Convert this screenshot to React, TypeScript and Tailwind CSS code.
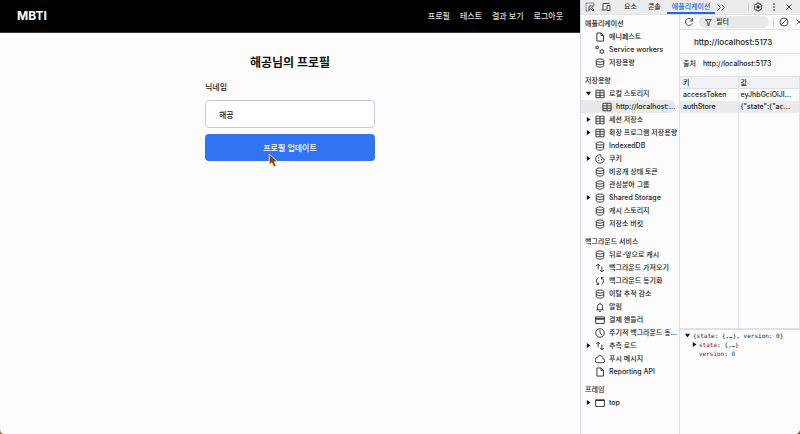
import React from 'react'

type IconName =
    | 'file'
    | 'gears'
    | 'database'
    | 'table'
    | 'cookie'
    | 'upDown'
    | 'sync'
    | 'bell'
    | 'card'
    | 'clock'
    | 'cloud'
    | 'frame'

type Item = {
    label: string
    icon: IconName
    arrow?: 'open' | 'closed'
    child?: boolean
}

const groups: { title: string; items: Item[] }[] = [
    {
        title: '애플리케이션',
        items: [
            { label: '매니페스트', icon: 'file' },
            { label: 'Service workers', icon: 'gears' },
            { label: '저장용량', icon: 'database' },
        ],
    },
    {
        title: '저장용량',
        items: [
            { label: '로컬 스토리지', icon: 'table', arrow: 'open' },
            { label: 'http://localhost:...', icon: 'table', child: true },
            { label: '세션 저장소', icon: 'table', arrow: 'closed' },
            { label: '확장 프로그램 저장용량', icon: 'table', arrow: 'closed' },
            { label: 'IndexedDB', icon: 'database' },
            { label: '쿠키', icon: 'cookie', arrow: 'closed' },
            { label: '비공개 상태 토큰', icon: 'database' },
            { label: '관심분야 그룹', icon: 'database' },
            { label: 'Shared Storage', icon: 'database', arrow: 'closed' },
            { label: '캐시 스토리지', icon: 'database' },
            { label: '저장소 버킷', icon: 'database' },
        ],
    },
    {
        title: '백그라운드 서비스',
        items: [
            { label: '뒤로-앞으로 캐시', icon: 'database' },
            { label: '백그라운드 가져오기', icon: 'upDown' },
            { label: '백그라운드 동기화', icon: 'sync' },
            { label: '이탈 추적 감소', icon: 'database' },
            { label: '알림', icon: 'bell' },
            { label: '결제 핸들러', icon: 'card' },
            { label: '주기적 백그라운드 동...', icon: 'clock' },
            { label: '추측 로드', icon: 'upDown', arrow: 'closed' },
            { label: '푸시 메시지', icon: 'cloud' },
            { label: 'Reporting API', icon: 'file' },
        ],
    },
    {
        title: '프레임',
        items: [{ label: 'top', icon: 'frame', arrow: 'closed' }],
    },
]

const shapes: Record<IconName, React.ReactNode> = {
    file: <path d="M3 1.500h6.500l4 4v9H3zM9.500 1.500v4h4" />,
    gears: (
        <>
            <circle cx="3.5" cy="4" r="1.8" />
            <path d="M3.5 1v1M3.5 6v1M.8 2.5l1 .6M6.2 5.5l-1-.6M.8 5.5l1-.6M6.2 2.5l-1 .6" />
            <circle cx="11" cy="10.5" r="2.8" />
            <path d="M11 6.2v1.5M11 13.3v1.5M7.2 8.3l1.3.8M13.5 11.9l1.3.8M7.2 12.7l1.3-.8M13.5 9.1l1.3-.8" />
        </>
    ),
    database: (
        <>
            <ellipse cx="8" cy="4" rx="6" ry="2.6" />
            <path d="M2 4v8c0 1.5 2.7 2.6 6 2.6s6-1.1 6-2.6V4M2 8c0 1.5 2.7 2.6 6 2.6S14 9.500 14 8" />
        </>
    ),
    table: <path d="M1.500 2h13v12h-13zM1.500 6h13M1.500 10h13M8 2v12" />,
    cookie: (
        <>
            <path d="M8 1.200a6.800 6.800 0 1 0 6.800 6.800c-1.800 0-2.800-1-2.800-2.500-2 0-3.200-1.500-2.600-4.100z" />
            <path d="M5 6h1.500M5.500 10.500h1.500M9.500 9h1.500" strokeWidth="2" />
        </>
    ),
    upDown: <path d="M5 10V2M2 4.800L5 1.800l3 3M11 6v8M8 11.200l3 3 3-3" />,
    sync: <path d="M5.500 2.500C1.500 5 1.500 11 5.500 13.500M2.500 13.800h3.300v-3.300M10.500 13.500c4-2.500 4-8.500 0-11M13.500 2.200h-3.300v3.300" />,
    bell: <path d="M2.500 12.500h11M4 12.500V7a4 4 0 0 1 8 0v5.500M8 1.200V3M6.500 14.800h3" />,
    card: (
        <>
            <path d="M1 3h14v10.500H1z" />
            <path d="M1 6.200h14" strokeWidth="2.600" />
        </>
    ),
    clock: (
        <>
            <circle cx="8" cy="8" r="6.800" />
            <path d="M8 3.500V8l3 3" />
        </>
    ),
    cloud: <path d="M4.200 13.800h8a3.100 3.100 0 0 0 .5-6.200C12.200 4.300 10.400 2.600 8 2.600c-2.100 0-3.400 1.100-4.100 3a4.100 4.100 0 0 0 .3 8.200z" />,
    frame: (
        <>
            <path d="M1 3h14v10.500H1z" />
            <path d="M1 3.800h14" strokeWidth="2" />
        </>
    ),
}

const TreeIcon = ({ name }: { name: IconName }) => (
    <svg viewBox="0 0 16 16" className="size-[10px] shrink-0" fill="none" stroke="#333" strokeWidth="1.5">
        {shapes[name]}
    </svg>
)

const Arrow = ({ open }: { open?: boolean }) => (
    <svg viewBox="0 0 6 6" className="size-[5px] shrink-0" fill="#111">
        {open ? <path d="M0 1h6L3 5.500z" /> : <path d="M1 0v6l4.500-3z" />}
    </svg>
)

const Header = () => (
    <header className="flex h-[33px] items-center justify-between border-b border-[#333] bg-black px-[17px] text-white">
        <a href="#home" className="text-[12px] font-bold">
            MBTI
        </a>
        <nav className="flex gap-[10px] text-[8px] font-medium text-[#ddd]">
            <a href="#profile">프로필</a>
            <a href="#test">테스트</a>
            <a href="#results">결과 보기</a>
            <a href="#logout">로그아웃</a>
        </nav>
    </header>
)

const Cursor = () => (
    <svg viewBox="0 0 10 14" className="absolute top-[19px] left-[63px] h-[15px] w-[11px]">
        <path d="M1 1v10l2.500-2 1.700 4 2.300-.9-1.700-3.900H9z" fill="#8a4310" stroke="#f3e9e0" strokeWidth=".8" />
    </svg>
)

const Profile = () => (
    <main className="mx-auto w-full max-w-[170px] pt-[22px]">
        <h1 className="text-center text-[12px] leading-[16px] font-bold text-[#111]">해공님의 프로필</h1>
        <form>
            <label htmlFor="nickname" className="mt-[10px] block text-[8px] leading-[12px] font-medium text-[#222]">
                닉네임
            </label>
            <input
                id="nickname"
                defaultValue="해공"
                className="mt-[7px] block h-[28px] w-full rounded-[4px] border border-[#c9cbd3] bg-white px-[13px] text-[8px] font-medium text-[#222] outline-none"
            />
            <div className="relative mt-[6px]">
                <button
                    type="button"
                    className="block h-[27px] w-full rounded-[4px] bg-[#3174f1] text-[8px] font-medium text-white"
                >
                    프로필 업데이트
                </button>
                <Cursor />
            </div>
        </form>
    </main>
)

const TabBar = () => (
    <div className="flex h-[15px] items-stretch border-b border-[#dcdfe4] bg-[#ececec] text-[7px] font-medium text-[#333]">
        <button aria-label="검사" className="ml-[4px] w-[11px]">
            <svg viewBox="0 0 20 20" className="size-[10px]" fill="none" stroke="#444" strokeWidth="1.800">
                <path d="M18 7V2H2v16h5" strokeDasharray="2.500 1.500" />
                <path d="M8 8h9l-3.500 3 4.500 5-2 2-4.500-5L8 17z" />
            </svg>
        </button>
        <button aria-label="기기" className="ml-[5px] w-[11px]">
            <svg viewBox="0 0 20 20" className="size-[10px]" fill="none" stroke="#444" strokeWidth="2">
                <path d="M17 3H4v12M1 16h9M12 7h6v10h-6z" />
            </svg>
        </button>
        <button className="ml-[12px]">요소</button>
        <button className="ml-[11px]">콘솔</button>
        <button className="ml-[6px] border-b-2 border-[#2468dc] px-[5px] pt-[2px] leading-[10px] text-[#2468dc]">
            애플리케이션
        </button>
        <button aria-label="더보기" className="ml-[2px]">
            <svg viewBox="0 0 14 12" className="h-[7px] w-[8px]" fill="none" stroke="#444" strokeWidth="1.600">
                <path d="M1 1l5 5-5 5M8 1l5 5-5 5" />
            </svg>
        </button>
        <span className="my-[3px] ml-auto w-px bg-[#d5d5d5]" />
        <button aria-label="설정" className="ml-[4px]">
            <svg viewBox="0 0 20 20" className="size-[10px]" fill="none" stroke="#333" strokeWidth="1.900">
                <path d="M8 2h4l1 2.500 2.500-.3 2 3.500L16 10l1.500 2.300-2 3.500-2.500-.3L12 18H8l-1-2.500-2.500.3-2-3.500L4 10 2.500 7.700l2-3.500 2.500.3z" />
                <circle cx="10" cy="10" r="2.500" fill="#333" />
            </svg>
        </button>
        <button aria-label="메뉴" className="ml-[9px]">
            <svg viewBox="0 0 4 16" className="h-[8px] w-[4px]" fill="#333">
                <circle cx="2" cy="2" r="1.700" />
                <circle cx="2" cy="8" r="1.700" />
                <circle cx="2" cy="14" r="1.700" />
            </svg>
        </button>
        <button aria-label="닫기" className="mr-[8px] ml-[10px]">
            <svg viewBox="0 0 12 12" className="size-[6px]" stroke="#333" strokeWidth="1.800">
                <path d="M1 1l10 10M11 1L1 11" />
            </svg>
        </button>
    </div>
)

const Sidebar = () => (
    <aside className="flex w-[99px] shrink-0 flex-col gap-[5px] overflow-hidden border-r border-[#dde0e6] pt-[2px] text-[7px] leading-[13px] font-medium text-[#222]">
        {groups.map((group) => (
            <section key={group.title}>
                <h2 className="pl-[4px]">{group.title}</h2>
                <ul>
                    {group.items.map((item) => (
                        <li
                            key={item.label}
                            className={
                                item.child
                                    ? 'mr-[3px] flex h-[13px] items-center gap-[4px] rounded-r-full bg-[#e9e9e9] pl-[21px] whitespace-nowrap'
                                    : 'flex h-[13px] items-center gap-[4px] pl-[5px] whitespace-nowrap'
                            }
                        >
                            {!item.child && (
                                <span className="flex w-[5px] shrink-0">
                                    {item.arrow && <Arrow open={item.arrow === 'open'} />}
                                </span>
                            )}
                            <TreeIcon name={item.icon} />
                            <span>{item.label}</span>
                        </li>
                    ))}
                </ul>
            </section>
        ))}
    </aside>
)

const FilterBar = () => (
    <div className="flex h-[15px] shrink-0 items-center overflow-hidden border-b border-[#e1e3e8] pl-[4px]">
        <button aria-label="새로고침" className="shrink-0">
            <svg viewBox="0 0 20 20" className="size-[10px]" fill="none" stroke="#444" strokeWidth="2">
                <path d="M16.500 12.500A7 7 0 1 1 15.500 5.500L17 7.500M17.500 2v6h-6" />
            </svg>
        </button>
        <label className="ml-[5px] flex h-[12px] w-[70px] shrink-0 items-center gap-[4px] rounded-full bg-[#e9e9e9] pl-[6px]">
            <svg viewBox="0 0 12 12" className="size-[7px] shrink-0" fill="none" stroke="#333" strokeWidth="1.500">
                <path d="M1 1h10L7 6.500V11H5V6.500z" />
            </svg>
            <input
                aria-label="필터"
                placeholder="필터"
                className="w-full min-w-0 bg-transparent text-[7px] font-medium outline-none placeholder:text-[#333]"
            />
        </label>
        <span className="ml-[4px] h-[9px] w-px shrink-0 bg-[#d5d5d5]" />
        <button aria-label="모두 지우기" className="ml-[5px] shrink-0">
            <svg viewBox="0 0 20 20" className="size-[10px]" fill="none" stroke="#444" strokeWidth="1.900">
                <circle cx="10" cy="10" r="8" />
                <path d="M16 4L4 16" />
            </svg>
        </button>
        <button aria-label="선택 항목 삭제" className="ml-[7px] shrink-0">
            <svg viewBox="0 0 12 12" className="size-[6px]" stroke="#444" strokeWidth="1.800">
                <path d="M1 1l10 10M11 1L1 11" />
            </svg>
        </button>
    </div>
)

const StorageTable = () => (
    <div className="flex h-[252px] flex-col border-r border-[#dde0e6]">
        <table className="h-full w-full table-fixed border-collapse text-left text-[7px] leading-[11px] font-medium text-[#222]">
            <thead>
                <tr className="h-[12px] border-y border-[#dde0e6] bg-[#f1f2f3]">
                    <th className="w-[58px] border-r border-[#dde0e6] pl-[3px] font-medium">키</th>
                    <th className="pl-[2px] font-medium">값</th>
                </tr>
            </thead>
            <tbody>
                <tr className="h-[12px]">
                    <td className="border-r border-[#dde0e6] pl-[3px]">accessToken</td>
                    <td className="pl-[2px] whitespace-nowrap">eyJhbGciOiJI...</td>
                </tr>
                <tr className="h-[12px] bg-[#ebebeb]">
                    <td className="border-r border-[#dde0e6] pl-[3px]">authStore</td>
                    <td className="pl-[2px] whitespace-nowrap">{'{"state":{"ac...'}</td>
                </tr>
                <tr>
                    <td className="border-r border-[#dde0e6]" />
                    <td />
                </tr>
            </tbody>
        </table>
    </div>
)

const Preview = () => (
    <div className="border-t-2 border-[#dfe1e5] pt-px pl-[5px] font-['DejaVu_Sans_Mono',monospace] text-[6px] leading-[9px] whitespace-nowrap text-[#222]">
        <div className="flex items-center gap-[3px]">
            <Arrow open />
            {'{state: {,…}, version: 0}'}
        </div>
        <div className="flex items-center gap-[2px] pl-[7px]">
            <Arrow />
            <span>
                <span className="text-[#8e004b]">state</span>
                {': {,…}'}
            </span>
        </div>
        <div className="pl-[14px]">
            <span className="text-[#8e004b]">version</span>: <span className="text-[#0842a0]">0</span>
        </div>
    </div>
)

const DevTools = () => (
    <div className="flex w-[220px] shrink-0 flex-col border-l border-[#d5d8de]">
        <TabBar />
        <div className="flex flex-1">
            <Sidebar />
            <div className="min-w-0 flex-1 text-[#222]">
                <FilterBar />
                <h2 className="h-[24px] border-b border-[#e1e3e8] pl-[14px] text-[8px] leading-[25px] font-medium">
                    http://localhost:5173
                </h2>
                <p className="flex h-[22px] items-center gap-[7px] pb-[2px] pl-[3px] text-[7px] font-medium">
                    <span>출처</span>
                    <span>http://localhost:5173</span>
                </p>
                <StorageTable />
                <Preview />
            </div>
        </div>
    </div>
)

// Desktop showing behind the rounded window corners
const Corners = () => (
    <>
        <svg viewBox="0 0 5 5" className="absolute bottom-0 left-0 size-[5px]">
            <path d="M0 0q0 5 5 5H0z" fill="#8b7347" />
        </svg>
        <svg viewBox="0 0 5 5" className="absolute right-0 bottom-0 size-[5px]">
            <path d="M5 0q0 5-5 5h5z" fill="#6b4a35" />
        </svg>
    </>
)

export default function App() {
    return (
        <div className="relative flex min-h-screen overflow-hidden bg-[#fcfcfc] font-[Inter,'Noto_Sans_CJK_KR',sans-serif]">
            <div className="min-w-0 flex-1">
                <Header />
                <Profile />
            </div>
            <DevTools />
            <Corners />
        </div>
    )
}
